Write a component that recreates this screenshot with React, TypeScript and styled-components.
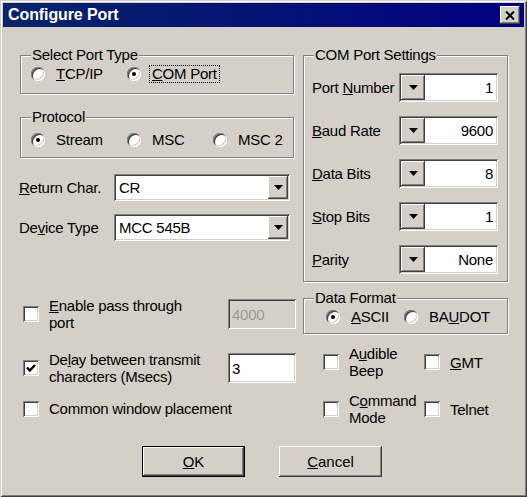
import React from 'react';
import styled, { createGlobalStyle, css } from 'styled-components';

const GlobalStyle = createGlobalStyle`
  html, body {
    margin: 0;
    padding: 0;
    background: #d4d0c8;
  }
  body {
    font-family: "Liberation Sans", Arial, sans-serif;
    font-size: 15px;
    letter-spacing: -0.25px;
    color: #000;
  }
  u {
    text-underline-offset: 1px;
  }
`;

const sunken = css`
  box-shadow: inset 1px 1px #808080, inset -1px -1px #fff, inset 2px 2px #404040,
    inset -2px -2px #d4d0c8;
`;

const raised = css`
  box-shadow: inset -1px -1px #404040, inset 1px 1px #fff, inset -2px -2px #808080,
    inset 2px 2px #d4d0c8;
`;

const DownArrow = () => (
  <svg width="9" height="5" viewBox="0 0 9 5">
    <polygon points="0,0 9,0 4.5,5" fill="#000" />
  </svg>
);

type RadioProps = { label: React.ReactNode; checked?: boolean; focus?: boolean; width?: number };
const Radio: React.FC<RadioProps> = ({ label, checked, focus, width }) => (
  <Option $w={width}>
    <RadioCircle $on={checked} />
    <OptionText $focus={focus}>{label}</OptionText>
  </Option>
);

type CheckProps = { label: React.ReactNode; checked?: boolean };
const Check: React.FC<CheckProps> = ({ label, checked }) => (
  <CheckOption>
    <CheckBox>
      {checked && (
        <svg width="10" height="10" viewBox="0 0 10 10">
          <path d="M1 4.5 L3.8 7.5 L9 2" stroke="#000" strokeWidth="2.4" fill="none" />
        </svg>
      )}
    </CheckBox>
    <CheckText>{label}</CheckText>
  </CheckOption>
);

const SpinField: React.FC<{ label: React.ReactNode; value: string }> = ({ label, value }) => (
  <SettingRow>
    <SettingLabel>{label}</SettingLabel>
    <SpinBox>
      <SpinButton>
        <DownArrow />
      </SpinButton>
      <SpinValue>{value}</SpinValue>
    </SpinBox>
  </SettingRow>
);

const ComboField: React.FC<{ label: React.ReactNode; value: string; $mt?: number }> = ({
  label,
  value,
  $mt,
}) => (
  <ComboRow $mt={$mt}>
    <ComboLabel>{label}</ComboLabel>
    <Combo>
      <ComboText>{value}</ComboText>
      <DropButton>
        <DownArrow />
      </DropButton>
    </Combo>
  </ComboRow>
);

export default function App() {
  return (
    <>
      <GlobalStyle />
      <Window>
        <TitleBar>
          <Title>Configure Port</Title>
          <CloseButton aria-label="Close">
            <svg width="10" height="9" viewBox="0 0 10 9">
              <path d="M1 0.5 L9 8.5 M9 0.5 L1 8.5" stroke="#000" strokeWidth="2" />
            </svg>
          </CloseButton>
        </TitleBar>
        <Body>
          <Columns>
            <LeftColumn>
              <GroupBox>
                <Legend>Select Port Type</Legend>
                <GroupRow $pt={2} $pb={10}>
                  <Radio width={96} label={<><u>T</u>CP/IP</>} />
                  <Radio checked focus label={<><u>C</u>OM Port</>} />
                </GroupRow>
              </GroupBox>
              <GroupBox $mt={15}>
                <Legend>Protocol</Legend>
                <GroupRow $pt={6} $pb={8}>
                  <Radio width={96} checked label="Stream" />
                  <Radio width={86} label="MSC" />
                  <Radio label="MSC 2" />
                </GroupRow>
              </GroupBox>
              <ComboField $mt={16} label={<><u>R</u>eturn Char.</>} value="CR" />
              <ComboField label={<>De<u>v</u>ice Type</>} value="MCC 545B" />
              <OptionLine $mt={56}>
                <Check label={<><u>E</u>nable pass through<br />port</>} />
                <Edit $disabled>4000</Edit>
              </OptionLine>
              <OptionLine $mt={20}>
                <Check checked label={<>De<u>l</u>ay between transmit<br />characters (Msecs)</>} />
                <Edit>3</Edit>
              </OptionLine>
              <OptionLine $mt={15}>
                <Check label="Common window placement" />
              </OptionLine>
            </LeftColumn>
            <RightColumn>
              <GroupBox>
                <Legend>COM Port Settings</Legend>
                <SettingsList>
                  <SpinField label={<>Port <u>N</u>umber</>} value="1" />
                  <SpinField label={<><u>B</u>aud Rate</>} value="9600" />
                  <SpinField label={<><u>D</u>ata Bits</>} value="8" />
                  <SpinField label={<><u>S</u>top Bits</>} value="1" />
                  <SpinField label={<><u>P</u>arity</>} value="None" />
                </SettingsList>
              </GroupBox>
              <GroupBox $mt={8}>
                <Legend>Data Format</Legend>
                <GroupRow $pt={2} $pb={7} $pl={22}>
                  <Radio width={78} checked label={<><u>A</u>SCII</>} />
                  <Radio label={<>BA<u>U</u>DOT</>} />
                </GroupRow>
              </GroupBox>
              <CheckGrid>
                <Check label={<>A<u>u</u>dible<br />Beep</>} />
                <Check label={<><u>G</u>MT</>} />
                <Check label={<>C<u>o</u>mmand<br />Mode</>} />
                <Check label="Telnet" />
              </CheckGrid>
            </RightColumn>
          </Columns>
          <ButtonRow>
            <PushButton $default>
              <u>O</u>K
            </PushButton>
            <PushButton>
              <u>C</u>ancel
            </PushButton>
          </ButtonRow>
        </Body>
      </Window>
    </>
  );
}

const Window = styled.div`
  width: 527px;
  height: 497px;
  box-sizing: border-box;
  padding: 3px;
  background: #d4d0c8;
  display: flex;
  flex-direction: column;
  box-shadow: inset 1px 1px #d4d0c8, inset -1px -1px #404040, inset 2px 2px #fff,
    inset -2px -2px #808080;
`;

const TitleBar = styled.div`
  height: 24px;
  flex: none;
  display: flex;
  align-items: center;
  justify-content: space-between;
  padding: 0 4px 0 5px;
  background: linear-gradient(90deg, #0a246a, #000080);
`;

const Title = styled.span`
  color: #fff;
  font-weight: bold;
  font-size: 16px;
  letter-spacing: -0.1px;
`;

const CloseButton = styled.button`
  width: 20px;
  height: 18px;
  padding: 0;
  border: none;
  background: #d4d0c8;
  display: flex;
  align-items: center;
  justify-content: center;
  ${raised};
`;

const Body = styled.div`
  flex: 1;
  display: flex;
  flex-direction: column;
  padding: 20px 0 17px 17px;
`;

const Columns = styled.div`
  flex: 1;
  display: grid;
  grid-template-columns: 276px 205px;
  column-gap: 7px;
  align-items: start;
`;

const LeftColumn = styled.div`
  display: flex;
  flex-direction: column;
`;

const RightColumn = styled.div`
  display: flex;
  flex-direction: column;
`;

const GroupBox = styled.fieldset<{ $mt?: number }>`
  margin: ${(p) => p.$mt ?? 0}px 0 0 0;
  padding: 0;
  min-width: 0;
  width: 272px;
  border: 1px solid #808080;
  box-shadow: inset 1px 1px #fff, 1px 1px #fff;

  ${RightColumn} & {
    width: 203px;
  }
`;

const Legend = styled.legend`
  margin-left: 10px;
  padding: 0 1px;
  line-height: 16px;
  background: #d4d0c8;
`;

const GroupRow = styled.div<{ $pt: number; $pb: number; $pl?: number }>`
  display: flex;
  align-items: center;
  padding: ${(p) => p.$pt}px 0 ${(p) => p.$pb}px ${(p) => p.$pl ?? 10}px;
`;

const Option = styled.label<{ $w?: number }>`
  display: flex;
  align-items: center;
  gap: 8px;
  flex: none;
  width: ${(p) => (p.$w ? `${p.$w}px` : 'auto')};
`;

const RadioCircle = styled.span<{ $on?: boolean }>`
  position: relative;
  width: 14px;
  height: 14px;
  flex: none;
  border-radius: 50%;
  background: #fff;
  box-shadow: inset 1px 1px #808080, inset -1px -1px #fff, inset 2px 2px #404040,
    inset -2px -2px #d4d0c8;

  &::after {
    content: '';
    display: ${(p) => (p.$on ? 'block' : 'none')};
    position: absolute;
    left: 5px;
    top: 5px;
    width: 4px;
    height: 4px;
    border-radius: 50%;
    background: #000;
  }
`;

const OptionText = styled.span<{ $focus?: boolean }>`
  padding: 0 2px;
  line-height: 16px;
  border: 1px ${(p) => (p.$focus ? 'dotted #000' : 'solid transparent')};
`;

const ComboRow = styled.div<{ $mt?: number }>`
  display: flex;
  align-items: center;
  margin-top: ${(p) => p.$mt ?? 13}px;
`;

const ComboLabel = styled.span`
  width: 95px;
  margin-left: -1px;
`;

const Combo = styled.div`
  width: 176px;
  height: 27px;
  box-sizing: border-box;
  display: flex;
  align-items: stretch;
  padding: 2px;
  background: #fff;
  ${sunken};
`;

const ComboText = styled.span`
  flex: 1;
  display: flex;
  align-items: center;
  padding-left: 3px;
`;

const DropButton = styled.span`
  width: 20px;
  display: flex;
  align-items: center;
  justify-content: center;
  background: #d4d0c8;
  ${raised};
`;

const OptionLine = styled.div<{ $mt?: number }>`
  display: flex;
  align-items: center;
  justify-content: space-between;
  margin-top: ${(p) => p.$mt ?? 0}px;
  padding-left: 3px;
`;

const CheckOption = styled.label`
  display: flex;
  align-items: center;
  gap: 10px;
`;

const CheckBox = styled.span`
  width: 16px;
  height: 16px;
  flex: none;
  display: flex;
  align-items: center;
  justify-content: center;
  background: #fff;
  ${sunken};
`;

const CheckText = styled.span`
  line-height: 17px;
`;

const Edit = styled.div<{ $disabled?: boolean }>`
  width: 68px;
  height: 30px;
  box-sizing: border-box;
  padding: 0 4px;
  display: flex;
  align-items: center;
  background: ${(p) => (p.$disabled ? '#d4d0c8' : '#fff')};
  color: ${(p) => (p.$disabled ? '#999' : '#000')};
  ${sunken};
`;

const SettingsList = styled.div`
  display: flex;
  flex-direction: column;
  gap: 14px;
  padding: 10px 7px 7px 8px;
`;

const SettingRow = styled.div`
  display: flex;
  align-items: center;
`;

const SettingLabel = styled.span`
  width: 87px;
`;

const SpinBox = styled.div`
  width: 99px;
  height: 29px;
  box-sizing: border-box;
  display: flex;
  padding: 2px;
  background: #fff;
  ${sunken};
`;

const SpinButton = styled.span`
  width: 24px;
  display: flex;
  align-items: center;
  justify-content: center;
  background: #d4d0c8;
  ${raised};
`;

const SpinValue = styled.span`
  flex: 1;
  display: flex;
  align-items: center;
  justify-content: flex-end;
  padding-right: 3px;
`;

const CheckGrid = styled.div`
  display: grid;
  grid-template-columns: 101px auto;
  row-gap: 13px;
  align-items: center;
  margin-top: 11px;
  padding-left: 20px;
`;

const ButtonRow = styled.div`
  display: flex;
  gap: 34px;
  padding-left: 122px;
`;

const PushButton = styled.button<{ $default?: boolean }>`
  width: 103px;
  height: 31px;
  padding: 0;
  border: none;
  font: inherit;
  color: #000;
  background: #d4d0c8;
  box-shadow: ${(p) =>
    p.$default
      ? 'inset 0 0 0 1px #000, inset -2px -2px #404040, inset 2px 2px #fff, inset -3px -3px #808080'
      : 'inset -1px -1px #404040, inset 1px 1px #fff, inset -2px -2px #808080, inset 2px 2px #d4d0c8'};
`;
